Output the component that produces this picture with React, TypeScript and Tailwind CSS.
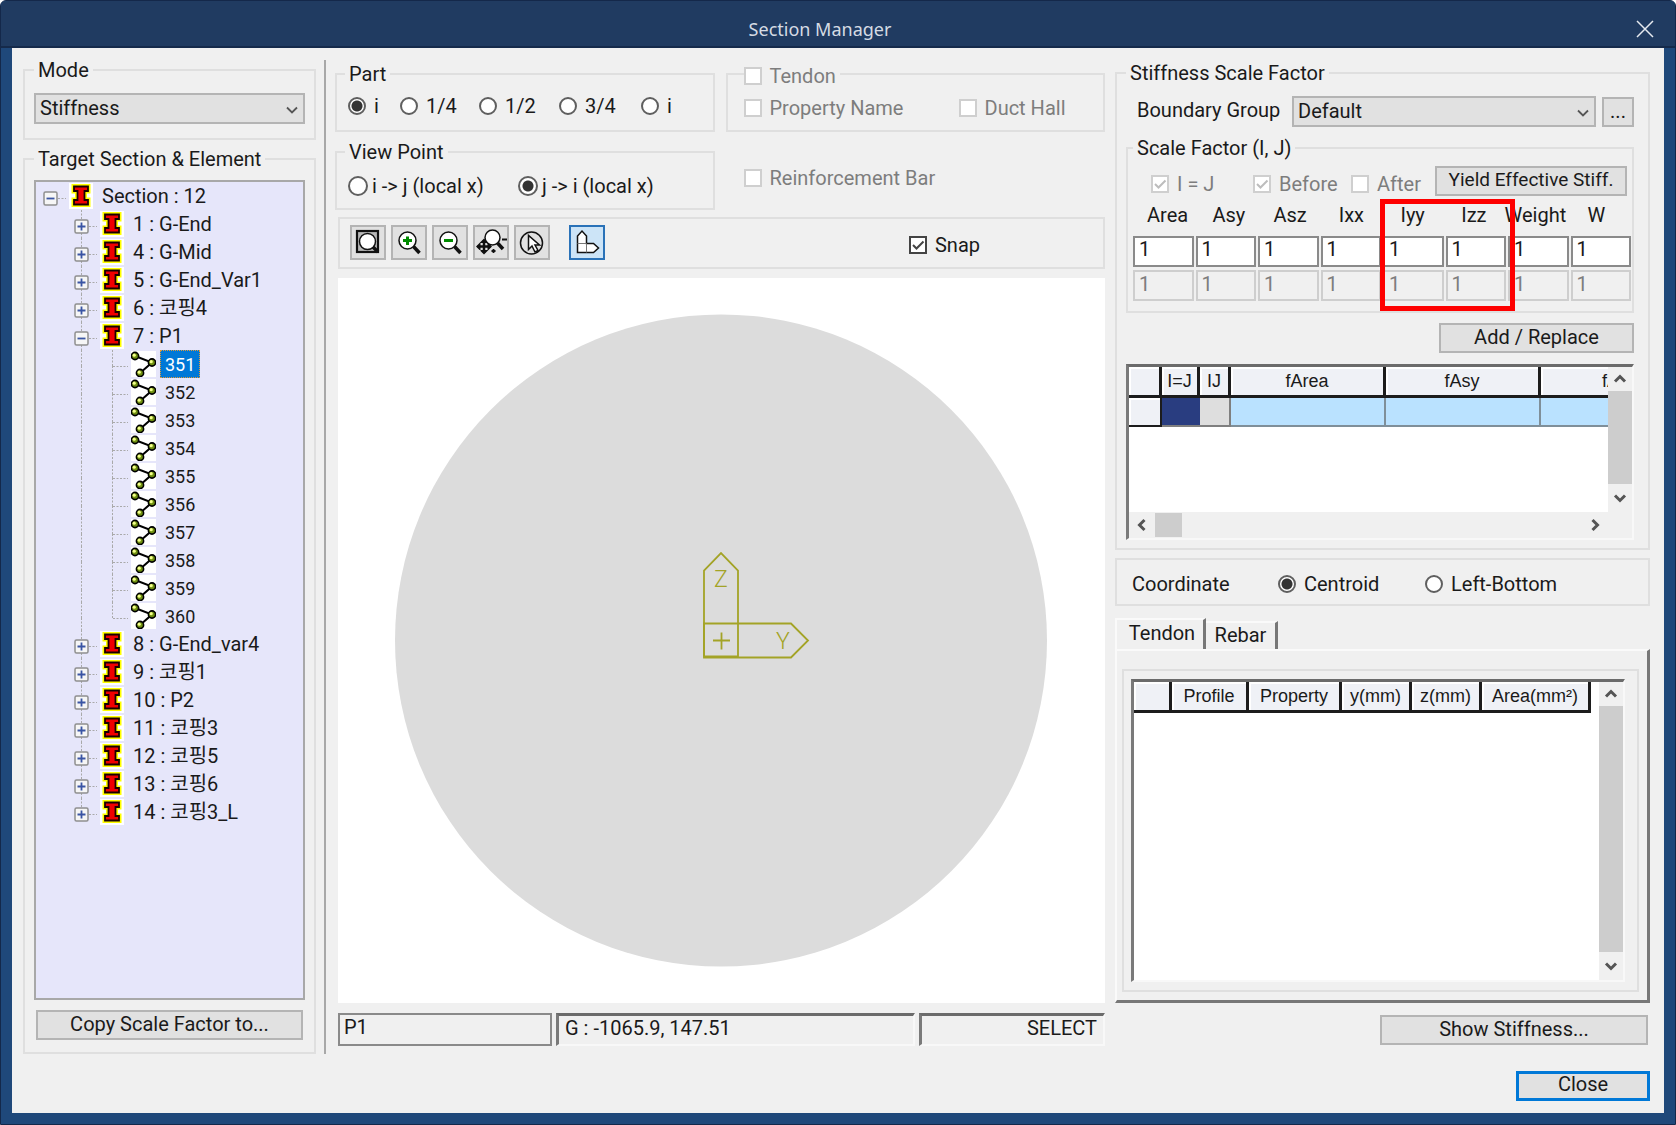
import { useState } from "react"
import type { ReactNode } from "react"

const sections = [
  { id: 1, name: "G-End" },
  { id: 4, name: "G-Mid" },
  { id: 5, name: "G-End_Var1" },
  { id: 6, name: "코핑4" },
  { id: 7, name: "P1", elements: [351, 352, 353, 354, 355, 356, 357, 358, 359, 360] },
  { id: 8, name: "G-End_var4" },
  { id: 9, name: "코핑1" },
  { id: 10, name: "P2" },
  { id: 11, name: "코핑3" },
  { id: 12, name: "코핑5" },
  { id: 13, name: "코핑6" },
  { id: 14, name: "코핑3_L" },
]

const factors = ["Area", "Asy", "Asz", "Ixx", "Iyy", "Izz", "Weight", "W"]

function Chevron({ dir, thin = false }: { dir: "up" | "down" | "left" | "right"; thin?: boolean }) {
  const d = {
    up: "M2 9.5 7 4.5l5 5",
    down: "M2 4.5l5 5 5-5",
    left: "M9.5 2l-5 5 5 5",
    right: "M4.5 2l5 5-5 5",
  }[dir]
  return (
    <svg viewBox="0 0 14 14" className="size-3.5" fill="none" stroke="#555" strokeWidth={thin ? 1.8 : 3}>
      <path d={d} />
    </svg>
  )
}

function Group({ title, className = "", children }: { title: ReactNode; className?: string; children: ReactNode }) {
  return (
    <fieldset className={`min-w-0 border-2 border-[#dfdfdf] ${className}`}>
      <legend className="px-1 leading-5">{title}</legend>
      {children}
    </fieldset>
  )
}

function Select({ id, label, value, className = "" }: { id: string; label: string; value: string; className?: string }) {
  return (
    <div className={`relative ${className}`}>
      <select
        id={id}
        aria-label={label}
        className="block h-[31px] w-full appearance-none border-2 border-[#b4b4b4] bg-[#e1e1e1] pb-0.5 pl-1 leading-6"
      >
        <option>{value}</option>
      </select>
      <span className="pointer-events-none absolute top-2.5 right-1.5">
        <Chevron dir="down" thin />
      </span>
    </div>
  )
}

function Button({ className = "", children }: { className?: string; children: ReactNode }) {
  return (
    <button
      type="button"
      className={`h-[30px] border-2 border-[#b4b4b4] bg-[#e1e1e1] pb-1 leading-6 whitespace-nowrap ${className}`}
    >
      {children}
    </button>
  )
}

function Radio({ name, label, checked = false, big = false }: { name: string; label: string; checked?: boolean; big?: boolean }) {
  return (
    <label className={`flex items-center whitespace-nowrap ${big ? "gap-1" : "gap-2"}`}>
      <input
        type="radio"
        name={name}
        defaultChecked={checked}
        className={`shrink-0 appearance-none rounded-full border-2 border-[#5f5f5f] bg-white checked:bg-[radial-gradient(circle,#333_0_5px,white_6px)] ${big ? "size-5" : "size-[18px]"}`}
      />
      {label}
    </label>
  )
}

function Check({ label, checked = false, disabled = false }: { label: string; checked?: boolean; disabled?: boolean }) {
  return (
    <label className={`flex items-center gap-2 whitespace-nowrap ${disabled ? "text-[#7d7d7d]" : ""}`}>
      <span className="relative size-[18px] shrink-0">
        <input
          type="checkbox"
          defaultChecked={checked}
          disabled={disabled}
          className="peer block size-[18px] appearance-none border-2 border-[#444] bg-white disabled:border-[#cfcfcf]"
        />
        <svg
          viewBox="0 0 18 18"
          className="pointer-events-none absolute inset-0 hidden text-[#444] peer-checked:block peer-disabled:text-[#bdbdbd]"
          fill="none"
          stroke="currentColor"
          strokeWidth="2"
        >
          <path d="M4 9l3.5 3.5 7-7" />
        </svg>
      </span>
      {label}
    </label>
  )
}

// Connector tile of the tree: dotted guides and the optional expander box
function Joint({ up = true, down = true, across = true, box }: { up?: boolean; down?: boolean; across?: boolean; box?: "+" | "-" }) {
  return (
    <svg viewBox="0 0 31 28" className="h-7 w-[31px] shrink-0" fill="none" stroke="#a9a9a9">
      {up && <path d="M14.5 0v16" strokeDasharray="2 1.5" />}
      {down && <path d="M14.5 16v12" strokeDasharray="2 1.5" />}
      {across && <path d="M15 16.5h15" strokeDasharray="2 1.5" />}
      {box && (
        <>
          <rect x="8" y="10" width="13" height="13" rx="1.5" fill="#f6f6f6" stroke="#8f8f8f" strokeWidth="1.5" />
          <path d={box === "+" ? "M10.5 16.5h8M14.5 12.5v8" : "M10.5 16.5h8"} stroke="#3a55a4" strokeWidth="1.8" />
        </>
      )}
    </svg>
  )
}

function BeamIcon() {
  const d = "M5 3.5h14v4.500h-3.500v9H19v4.500H5V17h3.500V8H5z"
  return (
    <svg viewBox="0 0 24 26" className="ml-0.5 h-[26px] w-6 shrink-0 bg-white">
      <path d={d} fill="none" stroke="#ffff00" strokeWidth="5" />
      <path d={d} fill="#f00000" stroke="#1a0000" strokeWidth="1.8" />
    </svg>
  )
}

function ElementIcon() {
  return (
    <svg viewBox="0 0 25 26" className="ml-0.5 h-[26px] w-[25px] shrink-0 bg-white">
      <path d="M4 5l17 6.5L9 22" fill="none" stroke="#000" strokeWidth="2" />
      {[[4, 5], [21, 11.5], [9, 22]].map(([x, y]) => (
        <g key={x}>
          <circle cx={x} cy={y} r="3.6" fill="#6f9010" stroke="#000" strokeWidth="1.6" />
          <circle cx={x - 0.8} cy={y - 0.8} r="1.6" fill="#f4ff8c" />
        </g>
      ))}
    </svg>
  )
}

function SectionTree() {
  const [selected, setSelected] = useState(351)
  return (
    <ul className="flex-1 border-2 border-[#a8a8a8] bg-[#e6e6fa]">
      <li>
        <div className="flex h-7 items-center">
          <button type="button" aria-label="Collapse sections"><Joint up={false} down={false} box="-" /></button>
          <BeamIcon />
          <span className="ml-1 px-[5px]">Section : 12</span>
        </div>
        <ul>
          {sections.map((s, i) => (
            <li key={s.id}>
              <div className="flex h-7 items-center pl-[31px]">
                <button type="button" aria-label={`Toggle ${s.name}`}>
                  <Joint down={i < sections.length - 1} box={s.elements ? "-" : "+"} />
                </button>
                <BeamIcon />
                <span className="ml-1 px-[5px]">{s.id} : {s.name}</span>
              </div>
              {s.elements && (
                <ul>
                  {s.elements.map((e, n) => (
                    <li key={e} className="flex h-7 items-center pl-[31px]">
                      <Joint across={false} />
                      <Joint down={n < s.elements.length - 1} />
                      <ElementIcon />
                      <button
                        type="button"
                        onClick={() => setSelected(e)}
                        className={`ml-1 h-7 border border-dotted px-1 pb-0.5 text-lg ${e === selected ? "border-[#e09a3c] bg-[#0078d7] text-white" : "border-transparent"}`}
                      >
                        {e}
                      </button>
                    </li>
                  ))}
                </ul>
              )}
            </li>
          ))}
        </ul>
      </li>
    </ul>
  )
}

function ToolButton({ label, active = false, className = "", children }: { label: string; active?: boolean; className?: string; children: ReactNode }) {
  return (
    <button
      type="button"
      aria-label={label}
      className={`flex h-[35px] w-9 items-center justify-center border-2 ${active ? "border-[#2a72b8] bg-[#cce4f7]" : "border-[#b4b4b4] bg-[#e1e1e1]"} ${className}`}
    >
      <svg viewBox="0 0 32 32" className="size-8 shrink-0" fill="none" stroke="#111" strokeWidth="1.5">
        {children}
      </svg>
    </button>
  )
}

function Toolbar() {
  return (
    <div className="mt-[7px] ml-[3px] flex h-[52px] border-2 border-[#dfdfdf] pt-1.5 pl-2.5">
      <div className="flex gap-[5px]">
        <ToolButton label="Zoom fit">
          <rect x="5" y="4" width="21" height="21" fill="#b9b9b9" strokeWidth="2.2" />
          <circle cx="15.5" cy="14.5" r="8" fill="#fff" />
          <path d="M21 20l5 5" strokeWidth="3.5" />
        </ToolButton>
        <ToolButton label="Zoom in">
          <circle cx="14.5" cy="13.5" r="8.5" fill="#fff" />
          <path d="M20.500 19.500l6 6.500" strokeWidth="3.5" />
          <path d="M14.500 9.500v8.500M10 13.500h9" stroke="#008a00" strokeWidth="3" />
        </ToolButton>
        <ToolButton label="Zoom out">
          <circle cx="14.5" cy="13.5" r="8.5" fill="#fff" />
          <path d="M20.500 19.500l6 6.500" strokeWidth="3.5" />
          <path d="M10 13.500h9" stroke="#008a00" strokeWidth="3" />
        </ToolButton>
        <ToolButton label="Dynamic zoom">
          <circle cx="17.5" cy="10.5" r="7.5" fill="#fff" />
          <path d="M22.500 16l5.500 6" strokeWidth="3.5" />
          <path d="M9 13v13M2.500 19.500h13" strokeWidth="2.5" />
          <path d="M9 11.500l4.500 4.500h-9zM9 27.500l4.500-4.500h-9zM1 19.500l4.500-4.500v9zM17 19.500l-4.500-4.500v9z" fill="#111" stroke="none" />
          <path d="M27 12.500h5M16.500 24h4M18.500 22v4" strokeWidth="1.8" />
        </ToolButton>
        <ToolButton label="Pick">
          <circle cx="15.5" cy="16" r="11" />
          <path d="M12.500 8.500v14l3.500-3.500 3 6 3-1.500-3-5.500h4.500z" fill="#fff" />
        </ToolButton>
        <ToolButton label="Section axes" active className="ml-3.5">
          <path d="M6.500 25.500V9l4.500-5 4.500 5v7.500h7l5 4.500-5 4.500z" fill="#fff" />
          <path d="M6.500 16.500h9v9" stroke="#777" strokeWidth="1" />
        </ToolButton>
      </div>
      <div className="mr-[123px] ml-auto pt-2">
        <Check label="Snap" checked />
      </div>
    </div>
  )
}

function SectionCanvas() {
  return (
    <div className="mt-[9px] ml-[3px] flex min-h-[500px] flex-1 bg-white">
      <svg viewBox="0 0 767 724" className="w-full" role="img" aria-label="Section P1">
        <circle cx="383" cy="362" r="326" fill="#dcdcdc" />
        <g fill="none" stroke="#a3a326" strokeWidth="1.8">
          <path d="M366 378V292l17-17.500 17 17.500v86z" />
          <path d="M366 345h87l17 17-17 17h-87z" />
          <path d="M375 362h17M383.500 354v17" />
        </g>
        <g fill="#a3a326" fontSize="23" fontWeight="300" textAnchor="middle">
          <text x="383" y="308">Z</text>
          <text x="445" y="370">Y</text>
        </g>
      </svg>
    </div>
  )
}

const headCell =
  "h-[31px] overflow-hidden border-r-[3px] border-b-[3px] border-[#1c1c1c] bg-[#eff1f6] text-center font-normal whitespace-nowrap shadow-[inset_1px_1px_0_1px_#fff]"

const sunken =
  "border-t-[3px] border-r-2 border-b-2 border-l-[3px] border-t-[#6b6b6b] border-r-[#f8f8f8] border-b-[#f8f8f8] border-l-[#7a7a7a]"

function VerticalScroll() {
  return (
    <div className="flex w-6 shrink-0 flex-col bg-[#f0f0f0]">
      <button type="button" aria-label="Scroll up" className="flex h-6 shrink-0 items-center justify-center"><Chevron dir="up" /></button>
      <div className="flex-1 bg-[#cdcdcd]" />
      <button type="button" aria-label="Scroll down" className="flex h-7 shrink-0 items-center justify-center"><Chevron dir="down" /></button>
    </div>
  )
}

function FactorTable() {
  return (
    <div className={`mt-[11px] bg-[#f0f0f0] ${sunken}`}>
      <div className="flex h-[145px]">
        <div className="flex-1 overflow-hidden bg-white font-['Liberation_Sans',sans-serif]">
          <table className="w-[572px] table-fixed border-separate border-spacing-0 text-lg leading-6">
            <colgroup>
              <col className="w-[33px]" />
              <col className="w-[38px]" />
              <col className="w-[31px]" />
              <col className="w-[155px]" />
              <col className="w-[155px]" />
              <col className="w-[160px]" />
            </colgroup>
            <thead>
              <tr>
                {["", "I=J", "IJ", "fArea", "fAsy", "fAsz"].map((h) => <th key={h} className={headCell}>{h}</th>)}
              </tr>
            </thead>
            <tbody>
              <tr className="h-[29px]">
                <td className="border-r-2 border-b-2 border-[#1c1c1c] bg-[#eff1f6] shadow-[inset_1px_1px_0_1px_#fff]" />
                <td className="border-b-2 border-[#7f7f7f] bg-[#293d80]" />
                <td className="border-r-2 border-b-2 border-[#7f7f7f] bg-[#dedede]" />
                <td className="border-r-2 border-b-2 border-[#7f8f99] bg-[#bae2ff]" />
                <td className="border-r-2 border-b-2 border-[#7f8f99] bg-[#bae2ff]" />
                <td className="border-r-2 border-b-2 border-[#7f8f99] bg-[#bae2ff]" />
              </tr>
            </tbody>
          </table>
        </div>
        <VerticalScroll />
      </div>
      <div className="mr-6 flex h-[26px] items-center">
        <button type="button" aria-label="Scroll left" className="flex w-[26px] justify-center"><Chevron dir="left" /></button>
        <div className="h-6 w-[27px] bg-[#cdcdcd]" />
        <button type="button" aria-label="Scroll right" className="ml-auto flex w-[26px] justify-center"><Chevron dir="right" /></button>
      </div>
    </div>
  )
}

function StiffnessScaleFactor() {
  return (
    <Group title="Stiffness Scale Factor" className="pr-3.5 pb-2 pl-[9px]">
      <div className="mt-[13px] flex items-center pl-[11px]">
        <label htmlFor="boundary" className="w-[155px] pb-1">Boundary Group</label>
        <Select id="boundary" label="Boundary Group" value="Default" className="flex-1" />
        <Button className="ml-1.5 w-8">...</Button>
      </div>
      <Group title="Scale Factor (I, J)" className="mt-[11px] pr-px pb-2.5 pl-[5px]">
        <div className="mt-2 flex items-start pl-[18px]">
          <div className="w-[102px] pt-1.5"><Check label="I = J" checked disabled /></div>
          <div className="w-[98px] pt-1.5"><Check label="Before" checked disabled /></div>
          <div className="pt-1.5"><Check label="After" disabled /></div>
          <Button className="mr-1 ml-auto w-[192px] text-[19px]">Yield Effective Stiff.</Button>
        </div>
        <div className="relative mt-[9px]">
          <div className="mb-[11px] grid grid-cols-8 pr-1 pl-1">
            {factors.map((f) => (
              <label key={f} htmlFor={`i-${f}`} className="text-center leading-5 whitespace-nowrap">{f}</label>
            ))}
          </div>
          <div className="grid grid-cols-8 gap-x-0.5 gap-y-[3px]">
            {factors.map((f) => (
              <input key={f} id={`i-${f}`} defaultValue="1" className="h-[31px] w-full min-w-0 border-2 border-[#8a8a8a] bg-white pb-1.5 pl-1" />
            ))}
            {factors.map((f) => (
              <input
                key={f}
                aria-label={`${f} J`}
                defaultValue="1"
                disabled
                className="h-[31px] w-full min-w-0 border-2 border-[#cecece] bg-[#f0f0f0] pb-1 pl-1 text-[#7d7d7d]"
              />
            ))}
          </div>
          {/* highlight around Iyy and Izz */}
          <div className="pointer-events-none absolute -top-1.5 left-[247px] h-[112px] w-[135px] border-5 border-[#fe0000]" />
        </div>
      </Group>
      <div className="mt-2.5 flex justify-end">
        <Button className="w-[195px]">Add / Replace</Button>
      </div>
      <FactorTable />
    </Group>
  )
}

function TendonPanel() {
  return (
    <>
      <div role="tablist" className="mt-3 flex items-end">
        <button type="button" role="tab" aria-selected="true" className="h-[31px] w-[91px] border-t-2 border-r-[3px] border-l-2 border-t-[#fafafa] border-r-[#777] border-l-[#fafafa] pb-1 pl-1 leading-6">
          Tendon
        </button>
        <button type="button" role="tab" aria-selected="false" className="h-7 w-[72px] border-t-2 border-r-[3px] border-t-[#fafafa] border-r-[#777] pb-0.5 leading-6">
          Rebar
        </button>
      </div>
      <div className="flex flex-1 flex-col border-t-2 border-r-[3px] border-b-[3px] border-l-2 border-t-[#fafafa] border-r-[#777] border-b-[#777] border-l-[#fafafa] pt-[18px] pr-2 pb-2 pl-[5px]">
        <div className="flex flex-1 flex-col border-2 border-[#dfdfdf] pt-2 pr-3 pb-2 pl-[7px]">
          <div className={`flex flex-1 bg-white ${sunken}`}>
            <div className="flex-1 overflow-hidden font-['Liberation_Sans',sans-serif]">
              <table className="w-[457px] table-fixed border-separate border-spacing-0 text-lg leading-6">
                <colgroup>
                  <col className="w-[38px]" />
                  <col className="w-[77px]" />
                  <col className="w-[93px]" />
                  <col className="w-[70px]" />
                  <col className="w-[70px]" />
                  <col className="w-[109px]" />
                </colgroup>
                <thead>
                  <tr>
                    {["", "Profile", "Property", "y(mm)", "z(mm)", "Area(mm²)"].map((h) => <th key={h} className={headCell}>{h}</th>)}
                  </tr>
                </thead>
              </table>
            </div>
            <VerticalScroll />
          </div>
        </div>
      </div>
    </>
  )
}

export default function App() {
  return (
    <div className="flex min-h-screen min-w-[1400px] flex-col rounded-t-md border border-[#14284a] bg-[#1f487a] font-['Roboto','Noto_Sans_CJK_KR',sans-serif] text-xl leading-6 text-[#1a1a1a]">
      <header className="flex h-[47px] shrink-0 items-center rounded-t-md border-b-2 border-[#152a4b] bg-[#203b61] pt-2.5 pl-6">
        <h1 className="flex-1 text-center font-['Noto_Sans','Noto_Sans_CJK_KR',sans-serif] text-lg text-[#d5dbe4]">Section Manager</h1>
        <button type="button" aria-label="Close window" className="flex w-[60px] justify-center">
          <svg viewBox="0 0 18 18" className="size-[18px]" stroke="#e6eaf0" strokeWidth="1.5">
            <path d="M1 1l16 16M17 1L1 17" />
          </svg>
        </button>
      </header>

      <main className="mx-[11px] mb-[11px] flex flex-1 flex-col bg-[#f0f0f0] pt-3 pr-3.5 pb-3 pl-[11px]">
        <div className="flex flex-1">
          <div className="flex w-[293px] shrink-0 flex-col">
            <Group title="Mode" className="px-[9px] pt-[13px] pb-3.5">
              <Select id="mode" label="Mode" value="Stiffness" />
            </Group>
            <Group title={<>Target Section &amp; Element</>} className="mt-[9px] flex flex-1 flex-col px-[9px] pt-[11px] pb-3">
              <SectionTree />
              <Button className="mx-0.5 mt-2.5">Copy Scale Factor to...</Button>
            </Group>
          </div>

          <div className="ml-2 w-0.5 shrink-0 bg-[#a8a8a8]" />

          <div className="ml-[9px] flex min-w-0 flex-1 flex-col pt-1 pb-2">
            <div className="grid grid-cols-2 gap-x-[11px] gap-y-2.5">
              <Group title="Part" className="h-[68px] pl-2">
                <div className="mt-2.5 grid grid-cols-[52px_79px_80px_82px_auto] pl-[3px]">
                  <Radio name="part" label="i" checked />
                  <Radio name="part" label="1/4" />
                  <Radio name="part" label="1/2" />
                  <Radio name="part" label="3/4" />
                  <Radio name="part" label="i" />
                </div>
              </Group>
              <fieldset className="-mt-0.5 h-[70px] min-w-0 border-2 border-[#dfdfdf] pl-4">
                <legend className="pt-1 pr-1 leading-5"><Check label="Tendon" disabled /></legend>
                <div className="mt-2.5 flex">
                  <div className="w-[215px]"><Check label="Property Name" disabled /></div>
                  <Check label="Duct Hall" disabled />
                </div>
              </fieldset>
              <Group title="View Point" className="h-[68px] pl-2">
                <div className="mt-3 grid grid-cols-[170px_auto] pl-[3px]">
                  <Radio name="view" label="i -> j (local x)" big />
                  <Radio name="view" label="j -> i (local x)" checked big />
                </div>
              </Group>
              <div className="flex items-center pt-1 pl-[18px]">
                <Check label="Reinforcement Bar" disabled />
              </div>
            </div>
            <Toolbar />
            <SectionCanvas />
            <div className="mt-2.5 ml-[3px] flex h-[33px] gap-1">
              <div className="w-[214px] border-2 border-[#8a8a8a] pl-1">P1</div>
              <div className={`flex-1 pl-1.5 ${sunken}`}>G : -1065.9, 147.51</div>
              <div className={`w-[186px] pr-1.5 text-right ${sunken}`}>SELECT</div>
            </div>
          </div>

          <div className="ml-2.5 flex w-[535px] shrink-0 flex-col pt-[3px]">
            <StiffnessScaleFactor />
            <div role="radiogroup" aria-label="Coordinate" className="mt-2 flex h-12 items-center border-2 border-[#dfdfdf] pt-1 pl-[15px]">
              <span className="w-[146px]">Coordinate</span>
              <div className="w-[147px]"><Radio name="coord" label="Centroid" checked /></div>
              <Radio name="coord" label="Left-Bottom" />
            </div>
            <TendonPanel />
            <Button className="mt-3 mr-0.5 mb-[9px] w-[268px] self-end">Show Stiffness...</Button>
          </div>
        </div>
        <footer className="mt-[17px] flex justify-end">
          <button type="button" className="h-[30px] w-[134px] border-3 border-[#0078d7] bg-[#e1e1e1] pb-1 leading-5">Close</button>
        </footer>
      </main>
    </div>
  )
}
